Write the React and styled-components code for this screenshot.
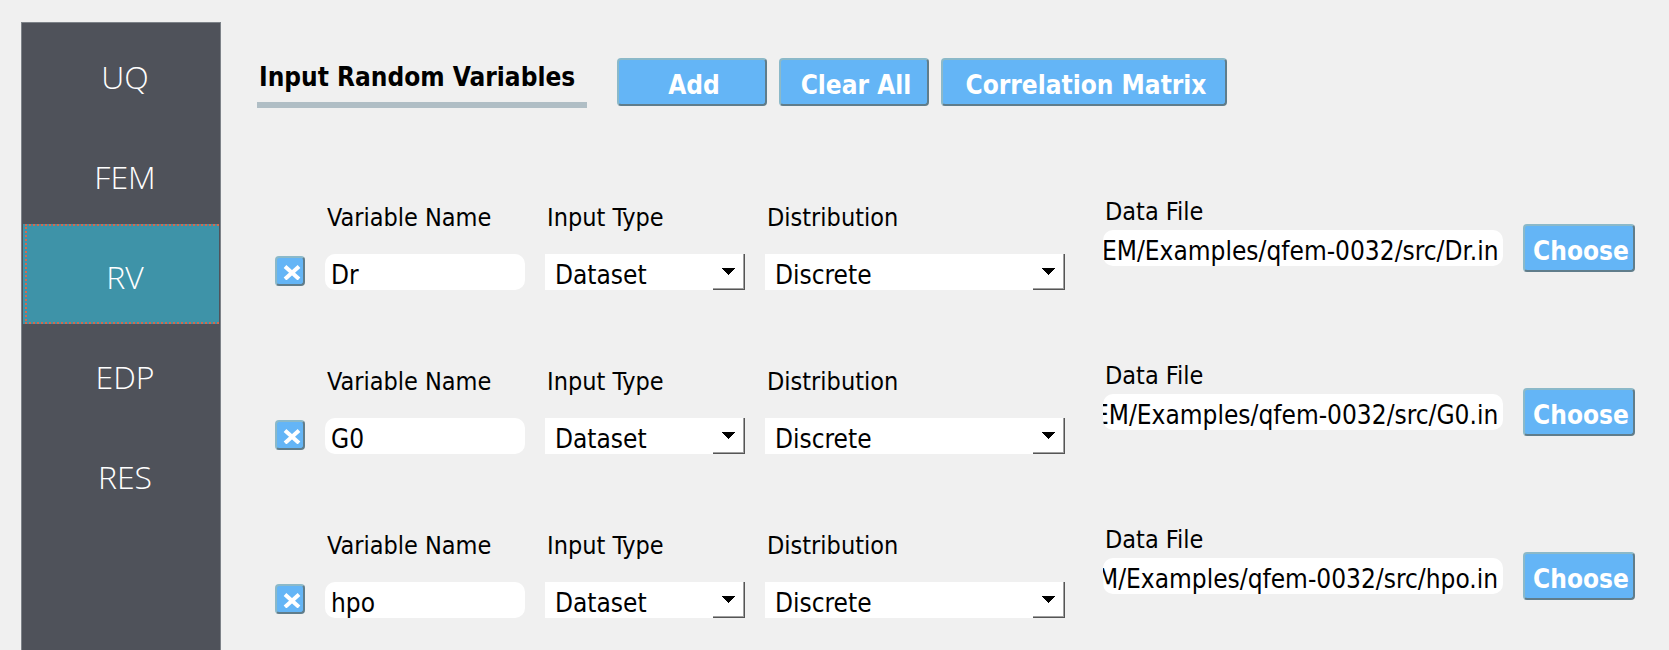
import React, { useLayoutEffect, useRef } from "react";
import styled, { createGlobalStyle, css } from "styled-components";

const GlobalStyle = createGlobalStyle`
  *, *::before, *::after { box-sizing: border-box; }
  body {
    margin: 0;
    background: #f0f0f0;
    color: #000;
    font-family: "DejaVu Sans Condensed", "DejaVu Sans", sans-serif;
    font-size: 26px;
  }
`;

const Page = styled.div`
  display: flex;
  gap: 36px;
  min-height: 100vh;
  padding: 22px 34px 0 21px;
`;

const Sidebar = styled.nav`
  flex: none;
  width: 200px;
  padding: 1px;
  border: 1px solid #7d8288;
  border-bottom: 0;
  background: #4f525a;
`;

const NavItem = styled.button`
  display: block;
  width: 100%;
  height: 100px;
  padding: 0 0 0 2px;
  border: 0;
  background: ${(p) => (p.$active ? "#3e93a8" : "transparent")};
  color: #fff;
  font: 300 32px "Open Sans", "Noto Sans", sans-serif;
`;

const NavLabel = styled.span`
  display: flex;
  align-items: center;
  justify-content: center;
  height: 100%;
  padding: 5px 0 0 4px;
  border: 2px dotted ${(p) => (p.$active ? "#d2694f" : "transparent")};
  border-right: 0;
`;

const Main = styled.main`
  flex: 1;
  min-width: 0;
  padding-top: 36px;
`;

const Header = styled.header`
  display: flex;
  gap: 12px;
  margin-bottom: 88px;
`;

const Title = styled.h1`
  width: 330px;
  height: 50px;
  margin: 0 18px 0 0;
  padding: 4px 0 0 2px;
  border-bottom: 6px solid #b0bec5;
  font-size: 26px;
  line-height: 30px;
  white-space: nowrap;
`;

const Button = styled.button`
  min-width: ${(p) => (p.$wide ? "286px" : "150px")};
  height: 48px;
  padding: 6px 0 0 4px;
  border: 2px solid;
  border-color: #8bb9c9 #607d8b #607d8b #8bb9c9;
  border-radius: 4px;
  background: #64b5f6;
  color: #fff;
  font: bold 26px "DejaVu Sans Condensed", "DejaVu Sans", sans-serif;
  white-space: nowrap;
`;

const ChooseButton = styled(Button)`
  min-width: 0;
  margin-top: 28px;
`;

const RemoveButton = styled(Button)`
  display: flex;
  align-items: center;
  justify-content: center;
  align-self: end;
  min-width: 0;
  height: 30px;
  margin-bottom: 4px;
  padding: 3px 0 0 4px;
`;

const Rows = styled.div`
  display: flex;
  flex-direction: column;
  gap: 70px;
  padding-left: 18px;
`;

const Row = styled.div`
  display: grid;
  grid-template-columns: 30px 200px 200px 300px minmax(0, 1fr) 112px;
  column-gap: 20px;
  align-items: start;
`;

const Field = styled.div`
  display: flex;
  flex-direction: column;
  gap: 20px;
  padding-top: 6px;
`;

const FileField = styled(Field)`
  gap: 2px;
  margin-left: 18px;
  padding-top: 0;
`;

const Label = styled.label`
  padding-left: 2px;
  font-size: 25px;
  line-height: 32px;
  white-space: nowrap;
`;

const control = css`
  display: block;
  width: 100%;
  height: 36px;
  border: 0;
  background: #fff;
  color: #000;
  font: 26px "DejaVu Sans Condensed", "DejaVu Sans", sans-serif;
`;

const TextInput = styled.input`
  ${control}
  padding: 5px 5px 0 6px;
  border-radius: 10px;
`;

const PathInput = styled(TextInput)`
  padding-left: 0;
  text-align: right;
`;

const SelectBox = styled.div`
  position: relative;
`;

const SelectInput = styled.select`
  ${control}
  appearance: none;
  padding: 5px 34px 0 10px;
  border-radius: 0;
`;

const DropButton = styled.span`
  position: absolute;
  top: 0;
  right: 0;
  bottom: 0;
  display: flex;
  align-items: center;
  justify-content: center;
  width: 32px;
  border: 1px solid #555;
  border-width: 0 1px 1px 0;
  box-shadow: inset -1px -1px 0 #a0a0a0;
  pointer-events: none;
`;

function Select({ id, value }) {
  return (
    <SelectBox>
      <SelectInput id={id} defaultValue={value}>
        <option>{value}</option>
      </SelectInput>
      <DropButton>
        <svg width="13" height="7" viewBox="0 0 13 7" shapeRendering="crispEdges" aria-hidden="true">
          <path d="M0 0h13v1h-1v1h-1v1h-1v1h-1v1h-1v1h-1v1h-1v-1h-1v-1h-1v-1h-1v-1h-1v-1h-1v-1h-1z" />
        </svg>
      </DropButton>
    </SelectBox>
  );
}

/* Keeps the end of a long path in view. */
function FilePath({ id, value }) {
  const ref = useRef(null);
  useLayoutEffect(() => {
    ref.current.scrollLeft = ref.current.scrollWidth;
  }, [value]);
  return <PathInput ref={ref} id={id} defaultValue={value} />;
}

function CrossIcon() {
  return (
    <svg width="18" height="15" viewBox="0 0 18 15" aria-hidden="true">
      <path d="M2 1.5L16 14M16 1.5L2 14" stroke="#fff" strokeWidth="4" />
    </svg>
  );
}

function VariableRow({ name, path }) {
  return (
    <Row>
      <RemoveButton type="button" aria-label={`Remove ${name}`}>
        <CrossIcon />
      </RemoveButton>
      <Field>
        <Label htmlFor={`${name}-name`}>Variable Name</Label>
        <TextInput id={`${name}-name`} defaultValue={name} />
      </Field>
      <Field>
        <Label htmlFor={`${name}-type`}>Input Type</Label>
        <Select id={`${name}-type`} value="Dataset" />
      </Field>
      <Field>
        <Label htmlFor={`${name}-dist`}>Distribution</Label>
        <Select id={`${name}-dist`} value="Discrete" />
      </Field>
      <FileField>
        <Label htmlFor={`${name}-file`}>Data File</Label>
        <FilePath id={`${name}-file`} value={path} />
      </FileField>
      <ChooseButton type="button">Choose</ChooseButton>
    </Row>
  );
}

const NAV = ["UQ", "FEM", "RV", "EDP", "RES"];
const VARIABLES = [
  { name: "Dr", path: "EM/Examples/qfem-0032/src/Dr.in" },
  { name: "G0", path: "EM/Examples/qfem-0032/src/G0.in" },
  { name: "hpo", path: "M/Examples/qfem-0032/src/hpo.in" },
];

export default function App() {
  return (
    <Page>
      <GlobalStyle />
      <Sidebar>
        {NAV.map((item) => (
          <NavItem key={item} type="button" $active={item === "RV"}>
            <NavLabel $active={item === "RV"}>{item}</NavLabel>
          </NavItem>
        ))}
      </Sidebar>
      <Main>
        <Header>
          <Title>Input Random Variables</Title>
          <Button type="button">Add</Button>
          <Button type="button">Clear All</Button>
          <Button type="button" $wide>Correlation Matrix</Button>
        </Header>
        <Rows>
          {VARIABLES.map((v) => (
            <VariableRow key={v.name} {...v} />
          ))}
        </Rows>
      </Main>
    </Page>
  );
}
